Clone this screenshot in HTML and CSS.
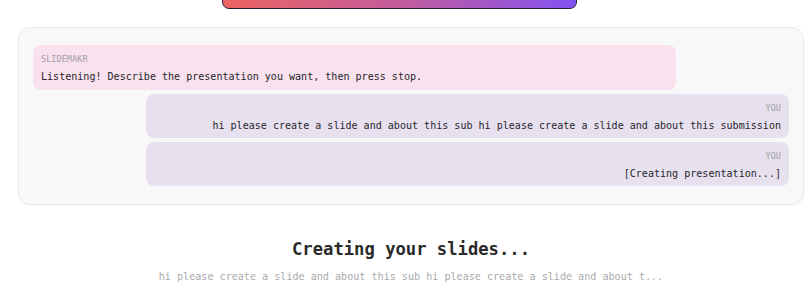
FILE: index.html
```html
<!DOCTYPE html>
<html>
<head>
<meta charset="utf-8">
<link rel="stylesheet" href="styles.css">
</head>
<body>
<div class="page">
  <div class="top-bar">
    <div class="top-btn"></div>
  </div>
  <div class="chat-card">
    <div class="bubble bot">
      <div class="label">SLIDEMAKR</div>
      <div class="text">Listening! Describe the presentation you want, then press stop.</div>
    </div>
    <div class="bubble user">
      <div class="label">YOU</div>
      <div class="text">hi please create a slide and about this sub hi please create a slide and about this submission</div>
    </div>
    <div class="bubble user">
      <div class="label">YOU</div>
      <div class="text">[Creating presentation...]</div>
    </div>
  </div>
  <div class="status">
    <h2 class="status-title">Creating your slides...</h2>
    <div class="status-sub">hi please create a slide and about this sub hi please create a slide and about t...</div>
  </div>
</div>
</body>
</html>
```

FILE: styles.css
```css
* { box-sizing: border-box; }
html, body { margin: 0; padding: 0; background: #ffffff; }
body {
  font-family: "DejaVu Sans Mono", "Liberation Mono", monospace;
  color: #2b2b2b;
}
.page {
  width: 806px;
  padding-left: 18px;
  padding-right: 2px;
}
.top-bar {
  height: 9px;
  overflow: hidden;
  display: flex;
  align-items: flex-end;
  padding-left: 204px;
}
.top-btn {
  flex-shrink: 0;
  width: 355px;
  height: 40px;
  border: 1.5px solid #2e1f36;
  border-radius: 7px;
  background: linear-gradient(90deg, #ec6360 0%, #c35c9c 50%, #8352f2 100%);
}
.chat-card {
  margin-top: 18px;
  width: 786px;
  border: 1px solid #ebebec;
  border-radius: 12px;
  background: #f8f8f9;
  padding: 17px 14px 18px;
  display: flex;
  flex-direction: column;
  gap: 4px;
  box-shadow: 0 1px 2px rgba(0,0,0,0.03);
}
.bubble {
  max-width: 85%;
  width: 643px;
  border-radius: 8px;
  padding: 9px 8px 6px;
}
.bubble.bot {
  align-self: flex-start;
  background: #f9e1ef;
}
.bubble.user {
  align-self: flex-end;
  background: #e7e0ef;
  text-align: right;
  padding-bottom: 5px;
}
.label {
  font-size: 8.6px;
  line-height: 10px;
  color: #a3a0a6;
  margin-bottom: 5px;
}
.text {
  font-size: 10.05px;
  line-height: 15px;
  color: #26262a;
  white-space: nowrap;
}
.status {
  margin-top: 32px;
  text-align: center;
}
.status-title {
  margin: 0;
  font-size: 17.2px;
  line-height: 24px;
  font-weight: bold;
  color: #2a2a2a;
}
.status-sub {
  margin-top: 8px;
  font-size: 10.1px;
  line-height: 15px;
  color: #a9a9ab;
  white-space: nowrap;
}
```
